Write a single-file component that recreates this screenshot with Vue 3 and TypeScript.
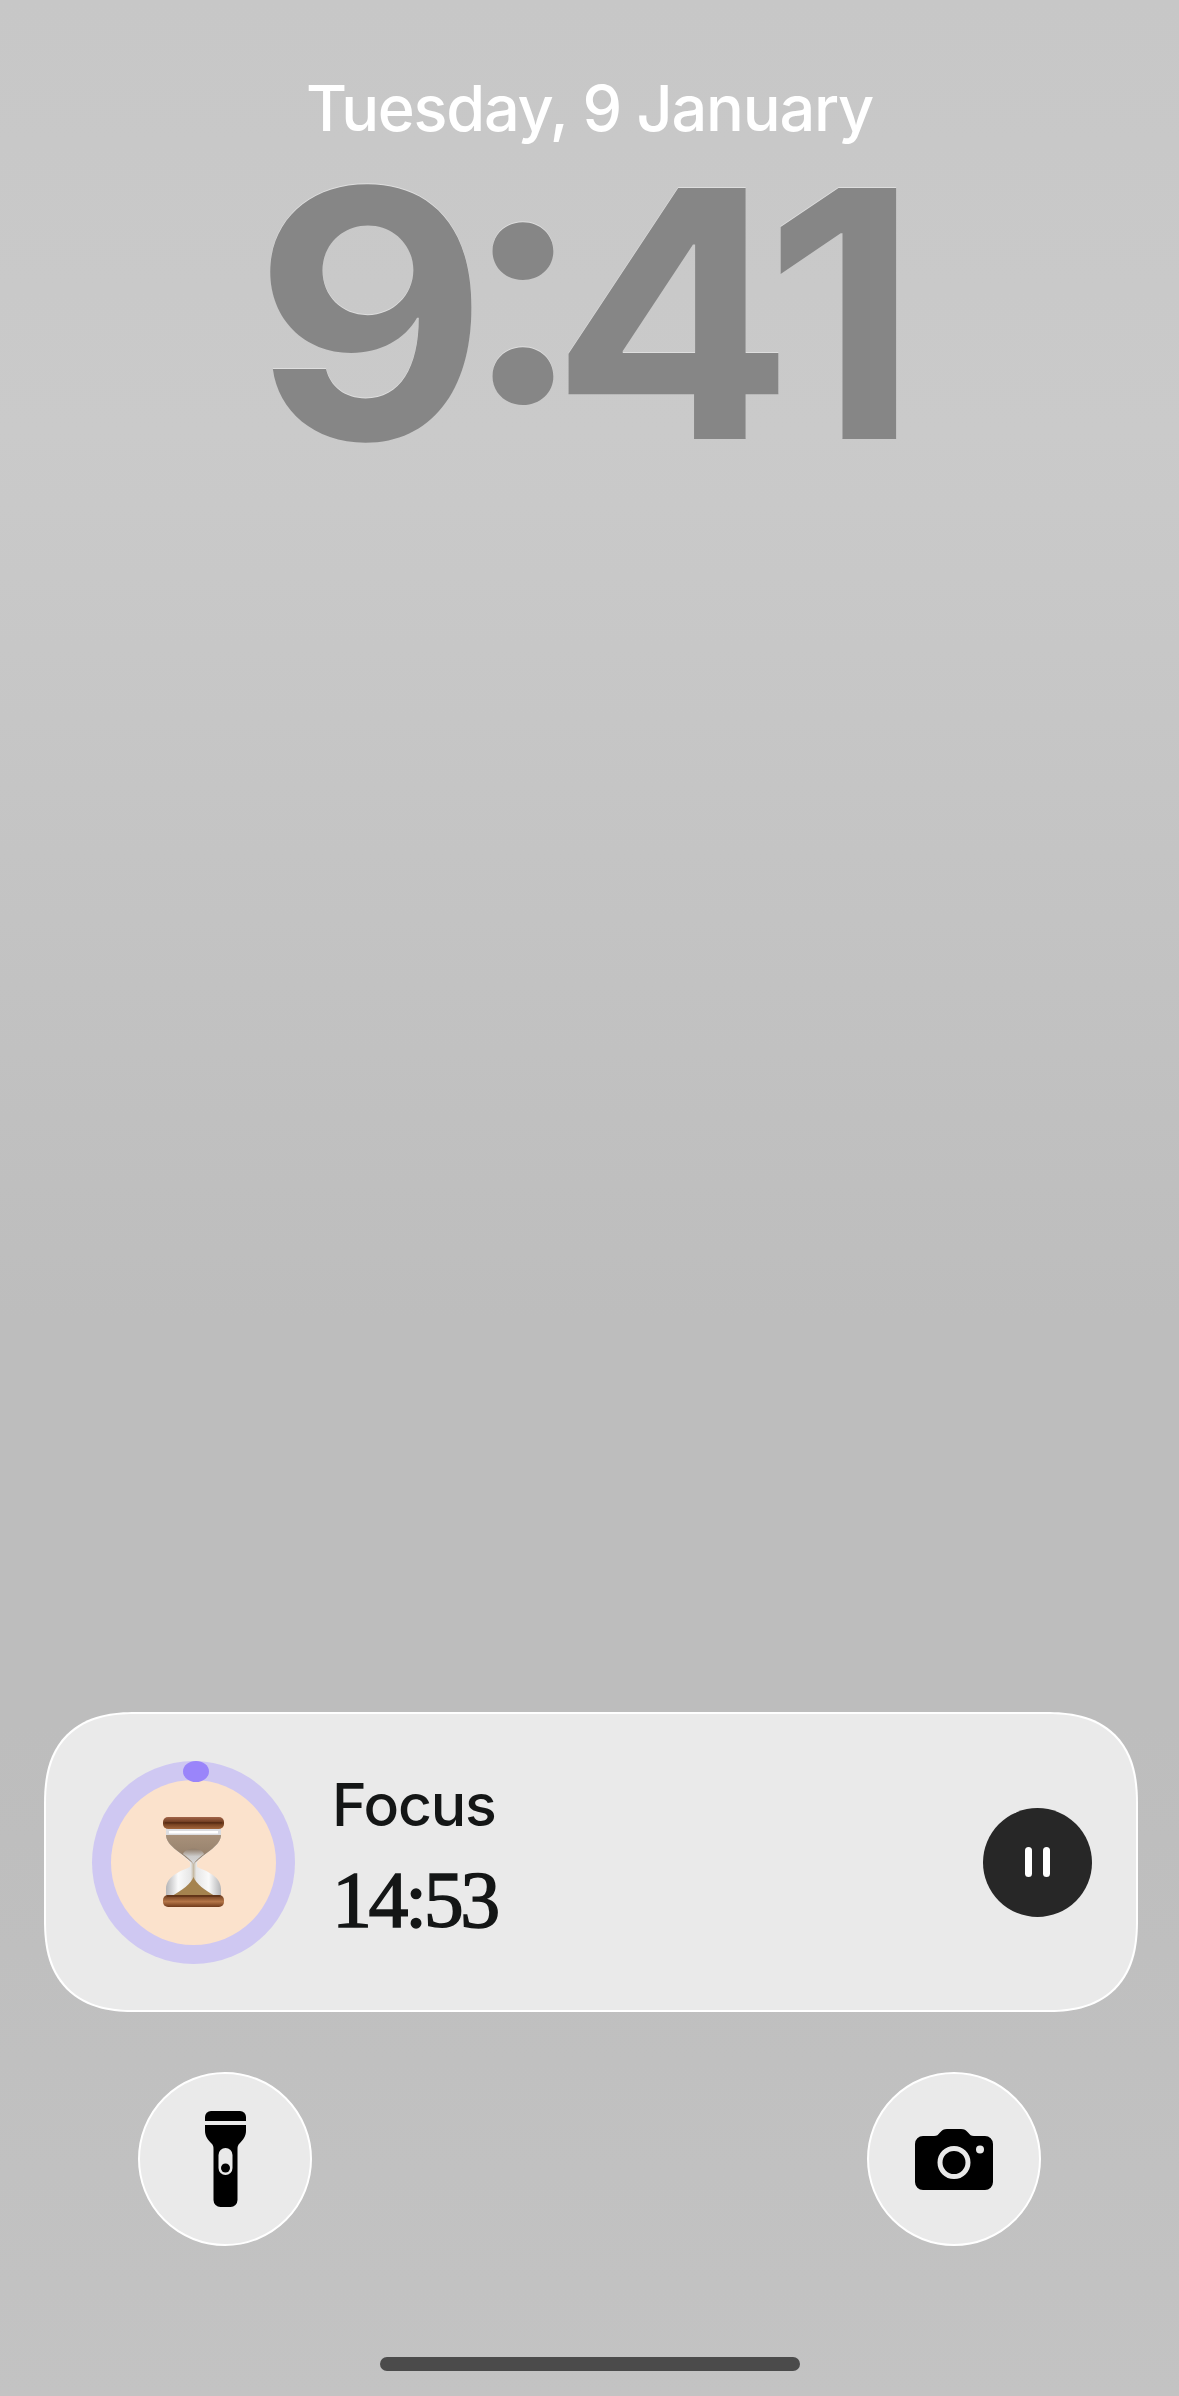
<script setup lang="ts">
const dateLabel = 'Tuesday, 9 January'
const timerLabel = 'Focus'
const timerValue = '14:53'

// the lock screen clock sits much tighter than the font's own spacing
const clockGlyphs = [
  { char: '9', tracking: -24 },
  { char: ':', tracking: -31 },
  { char: '4', tracking: -29 },
  { char: '1', tracking: 0 }
]
</script>

<template>
  <div class="lock">
    <header class="lock__head">
      <p class="lock__date">{{ dateLabel }}</p>
      <p class="lock__clock">
        <span
          v-for="glyph in clockGlyphs"
          :key="glyph.char"
          :style="{ letterSpacing: `${glyph.tracking}px` }"
        >{{ glyph.char }}</span>
      </p>
    </header>

    <section class="activity">
      <div class="activity__ring">
        <span class="activity__knob"></span>
        <div class="activity__face">
          <svg class="hourglass" viewBox="0 0 61 90" width="61" height="90">
            <defs>
              <linearGradient id="wood" x1="0" y1="0" x2="0" y2="1">
                <stop offset="0" stop-color="#a2654a" />
                <stop offset="0.5" stop-color="#693719" />
                <stop offset="1" stop-color="#a4673c" />
              </linearGradient>
              <linearGradient id="woodLow" x1="0" y1="0" x2="0" y2="1">
                <stop offset="0" stop-color="#6a391c" />
                <stop offset="0.55" stop-color="#b57648" />
                <stop offset="1" stop-color="#703a1b" />
              </linearGradient>
              <linearGradient id="sandTop" x1="0" y1="0" x2="0" y2="1">
                <stop offset="0" stop-color="#a8917a" />
                <stop offset="1" stop-color="#8f7b67" />
              </linearGradient>
              <linearGradient id="mound" x1="0" y1="0" x2="0" y2="1">
                <stop offset="0" stop-color="#8f7b67" />
                <stop offset="0.5" stop-color="#cdcccb" />
                <stop offset="1" stop-color="#d8d8d8" />
              </linearGradient>
              <linearGradient id="glass" x1="0" y1="0" x2="1" y2="0">
                <stop offset="0" stop-color="#b4b4b6" />
                <stop offset="0.22" stop-color="#fafafa" />
                <stop offset="0.45" stop-color="#e6e6e6" />
                <stop offset="0.5" stop-color="#c6baa4" />
                <stop offset="0.55" stop-color="#e6e6e6" />
                <stop offset="0.78" stop-color="#fafafa" />
                <stop offset="1" stop-color="#b4b4b6" />
              </linearGradient>
            </defs>
            <path d="M3 11H58V18C58 28 44 35 34 45V50C40 53 58 58 58 72V79H3V72C3 58 21 53 27 50V45C17 35 3 28 3 18Z" fill="url(#glass)" />
            <path d="M3 12H58V18H3Z" fill="#dcdde0" />
            <path d="M6 14H55V16.500H6Z" fill="#fff" />
            <path d="M3 18H58C58 28 44 35 34 44C32.500 45 31.500 46 30.500 47C29.500 46 28.500 45 27 44C17 35 3 28 3 18Z" fill="url(#sandTop)" />
            <path d="M20 37C22 30 39 30 41 37C37 40 33 43 30.500 47C28 43 24 40 20 37Z" fill="url(#mound)" />
            <path d="M30.500 60C33 67 42 73 52 79H9C19 73 28 67 30.500 60Z" fill="#a5834f" />
            <rect x="0" y="0" width="61" height="12" rx="5" fill="url(#wood)" />
            <rect x="2" y="5" width="57" height="1.500" fill="#4c2510" opacity="0.6" />
            <rect x="0" y="78" width="61" height="12" rx="5" fill="url(#woodLow)" />
            <rect x="4" y="78" width="53" height="2" fill="#5c3016" opacity="0.7" />
          </svg>
        </div>
      </div>
      <div class="activity__text">
        <p class="activity__label">{{ timerLabel }}</p>
        <p class="activity__time">{{ timerValue }}</p>
      </div>
      <button class="activity__pause" type="button" aria-label="Pause">
        <span></span>
        <span></span>
      </button>
    </section>

    <div class="shortcuts">
      <button class="shortcut" type="button" aria-label="Flashlight">
        <svg viewBox="0 0 41 96" width="41" height="96">
          <path d="M0 6a6 6 0 0 1 6-6h29a6 6 0 0 1 6 6v4H0z" fill="#000" />
          <path d="M0 14h41v6c0 5-3 9-6 12-2 2-2.500 3-2.500 6v51a7 7 0 0 1-7 7h-10a7 7 0 0 1-7-7V38c0-3-.500-4-2.500-6-3-3-6-7-6-12z" fill="#000" />
          <rect x="13.500" y="37" width="14" height="27" rx="7" fill="#e9e9e9" />
          <circle cx="20.500" cy="57" r="4.500" fill="#000" />
        </svg>
      </button>
      <button class="shortcut" type="button" aria-label="Camera">
        <svg viewBox="0 0 78 61" width="78" height="61">
          <path d="M8 7h11c3 0 4-1 6-3.500C27 1 29 0 32 0h14c3 0 5 1 7 3.500 2 2.500 3 3.500 6 3.500h11a8 8 0 0 1 8 8v38a8 8 0 0 1-8 8H8a8 8 0 0 1-8-8V15a8 8 0 0 1 8-8z" fill="#000" />
          <circle cx="39" cy="33.500" r="14" fill="none" stroke="#e9e9e9" stroke-width="5" />
          <circle cx="65" cy="20.500" r="4" fill="#e9e9e9" />
        </svg>
      </button>
    </div>

    <div class="home-bar"></div>
  </div>
</template>

<style>
html,
body {
  margin: 0;
  background: #c2c2c2;
}
</style>

<style scoped>
.lock {
  box-sizing: border-box;
  width: 1179px;
  height: 2396px;
  display: flex;
  flex-direction: column;
  overflow: hidden;
  font-family: Inter, "Liberation Sans", sans-serif;
  background: linear-gradient(180deg, #c7c7c7 0%, #cacaca 18%, #c6c6c6 30%, #bdbdbd 55%, #bdbdbd 72%, #c3c3c3 100%);
}

.lock__head {
  display: flex;
  flex-direction: column;
  align-items: center;
  padding-top: 70px;
}

.lock__date {
  margin: 0;
  font-size: 63px;
  line-height: 76px;
  font-weight: 500;
  letter-spacing: -1.250px;
  color: #fff;
}

.lock__clock {
  margin: 38px 6px 0 0;
  font-size: 345px;
  line-height: 260px;
  font-weight: 700;
  font-feature-settings: "case";
  color: #868686;
  text-shadow: 0 -1px 0 #dedede;
  transform: scaleX(1.045);
}

.activity {
  box-sizing: border-box;
  margin: auto 41px 0 44px;
  height: 300px;
  display: flex;
  align-items: center;
  padding: 0 44px 0 46px;
  background: #eaeaea;
  border: 2px solid #fff;
  border-radius: 76px;
}

@supports (corner-shape: squircle) {
  .activity {
    border-radius: 92px;
    corner-shape: superellipse(1.3);
  }
}

.activity__ring {
  position: relative;
  flex: none;
  width: 203px;
  height: 203px;
  display: flex;
  align-items: center;
  justify-content: center;
  border-radius: 50%;
  background: #cfc8f2;
}

.activity__knob {
  position: absolute;
  top: 0;
  left: 91px;
  width: 26px;
  height: 21px;
  border-radius: 50%;
  background: #9a85fa;
}

.activity__face {
  width: 165px;
  height: 165px;
  display: flex;
  align-items: center;
  justify-content: center;
  border-radius: 50%;
  background: #fbe2cc;
}

.activity__text {
  margin-left: 37px;
  margin-top: -14px;
  color: #141616;
}

.activity__label {
  margin: 0;
  font-size: 59px;
  font-weight: 450;
  line-height: 70px;
  letter-spacing: -1.200px;
}

.activity__time {
  margin: 20px 0 0;
  font-family: "Liberation Serif", serif;
  font-size: 80px;
  line-height: 80px;
  letter-spacing: -3.500px;
  -webkit-text-stroke: 1.500px #141616;
}

.activity__pause {
  flex: none;
  margin-left: auto;
  width: 109px;
  height: 109px;
  display: flex;
  align-items: center;
  justify-content: center;
  gap: 11px;
  padding: 0;
  border: 0;
  border-radius: 50%;
  background: #272727;
}

.activity__pause span {
  width: 7px;
  height: 30px;
  border-radius: 4px;
  background: #fff;
}

.shortcuts {
  display: flex;
  justify-content: space-between;
  margin-top: 60px;
  padding: 0 138px;
}

.shortcut {
  box-sizing: border-box;
  width: 174px;
  height: 174px;
  display: flex;
  align-items: center;
  justify-content: center;
  padding: 0;
  background: #eaeaea;
  border: 2px solid #fff;
  border-radius: 50%;
}

.home-bar {
  align-self: center;
  flex: none;
  width: 420px;
  height: 14px;
  margin: 111px 0 25px;
  border-radius: 7px;
  background: #4b4b4b;
}
</style>
